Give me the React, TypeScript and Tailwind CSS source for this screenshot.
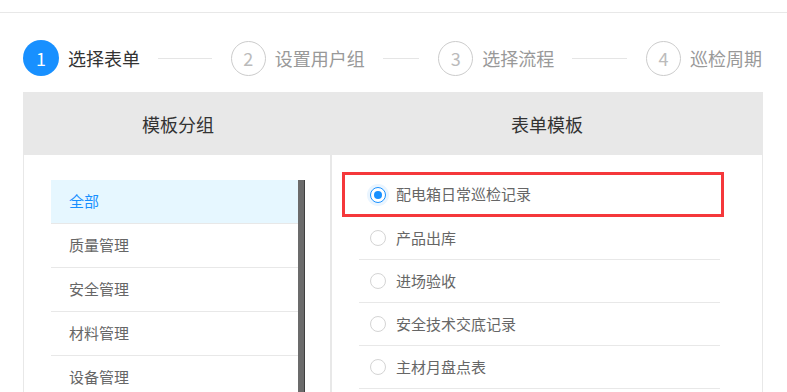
import React from "react";

const font = { fontFamily: '"Noto Sans CJK SC", "Noto Sans", sans-serif' };

const steps = ["选择表单", "设置用户组", "选择流程", "巡检周期"];
const groups = ["全部", "质量管理", "安全管理", "材料管理", "设备管理"];
const templates = ["产品出库", "进场验收", "安全技术交底记录", "主材月盘点表"];

const Radio = ({ checked }: { checked?: boolean }) =>
  checked ? (
    <span className="flex h-4 w-4 shrink-0 items-center justify-center rounded-full border border-[#1890ff] bg-white shadow-[0_0_0_3px_#eaf5ff]">
      <span className="h-2 w-2 rounded-full bg-[#1890ff]" />
    </span>
  ) : (
    <span className="h-4 w-4 shrink-0 rounded-full border border-[#d4d4d4] bg-white" />
  );

export default function App() {
  return (
    <div className="h-[392px] w-[787px] overflow-hidden bg-white" style={font}>
      <div className="h-[13px] border-b border-[#e8e8e8]" />

      {/* steps */}
      <div className="mt-[27px] flex items-center pl-[23px] pr-[25px]">
        {steps.map((s, i) => {
          const active = i === 0;
          const last = i === steps.length - 1;
          return (
            <div key={s} className={last ? "flex items-center" : "flex flex-1 items-center"}>
              <span
                className={
                  active
                    ? "flex h-[36px] w-[36px] items-center justify-center rounded-full bg-[#1890ff] text-[18px] text-white"
                    : "flex h-[35px] w-[35px] items-center justify-center rounded-full border border-[#cccccc] text-[18px] text-[#bbbbbb]"
                }
              >
                {i + 1}
              </span>
              <span
                className={
                  active
                    ? "ml-[9px] text-[18px] text-[#333333]"
                    : "ml-[9px] text-[18px] text-[#999999]"
                }
              >
                {s}
              </span>
              {!last && <span className="ml-[18px] mr-[19px] h-px flex-1 bg-[#e5e5e5]" />}
            </div>
          );
        })}
      </div>

      {/* panel */}
      <div className="ml-[23px] mt-[16px] w-[740px] border border-[#e8e8e8]">
        <div className="grid h-[62px] grid-cols-[308px_1fr] bg-[#e8e8e8] text-[18px] text-[#333333]">
          <div className="flex items-center justify-center">模板分组</div>
          <div className="flex items-center justify-center">表单模板</div>
        </div>

        <div className="grid grid-cols-[308px_1fr]">
          <div className="flex border-r-2 border-[#e8e8e8] pl-[27px] pt-[25px]">
            <div className="w-[247px]">
              {groups.map((g, i) => (
                <div
                  key={g}
                  className={
                    i === 0
                      ? "flex h-[44px] items-center border-b border-[#e8e8e8] bg-[#e6f7ff] pl-[18px] text-[15px] text-[#1890ff]"
                      : "flex h-[44px] items-center border-b border-[#e8e8e8] pl-[18px] text-[15px] text-[#666666]"
                  }
                >
                  {g}
                </div>
              ))}
            </div>
            <div className="w-[7px] self-stretch border-r border-[#3f3f3f] bg-[#6b6b6b]" />
          </div>

          <div className="pl-[10px] pt-[17px]">
            <div className="flex h-[45px] w-[382px] items-center gap-[10px] border-[3px] border-[#f5383b] pl-[25px] text-[15px] text-[#666666]">
              <Radio checked />
              <span>配电箱日常巡检记录</span>
            </div>
            <div className="ml-[17px] w-[361px]">
              {templates.map((t) => (
                <div
                  key={t}
                  className="flex h-[43px] items-center gap-[10px] border-b border-[#e8e8e8] pl-[11px] text-[15px] text-[#666666]"
                >
                  <Radio />
                  <span>{t}</span>
                </div>
              ))}
            </div>
          </div>
        </div>
      </div>
    </div>
  );
}
